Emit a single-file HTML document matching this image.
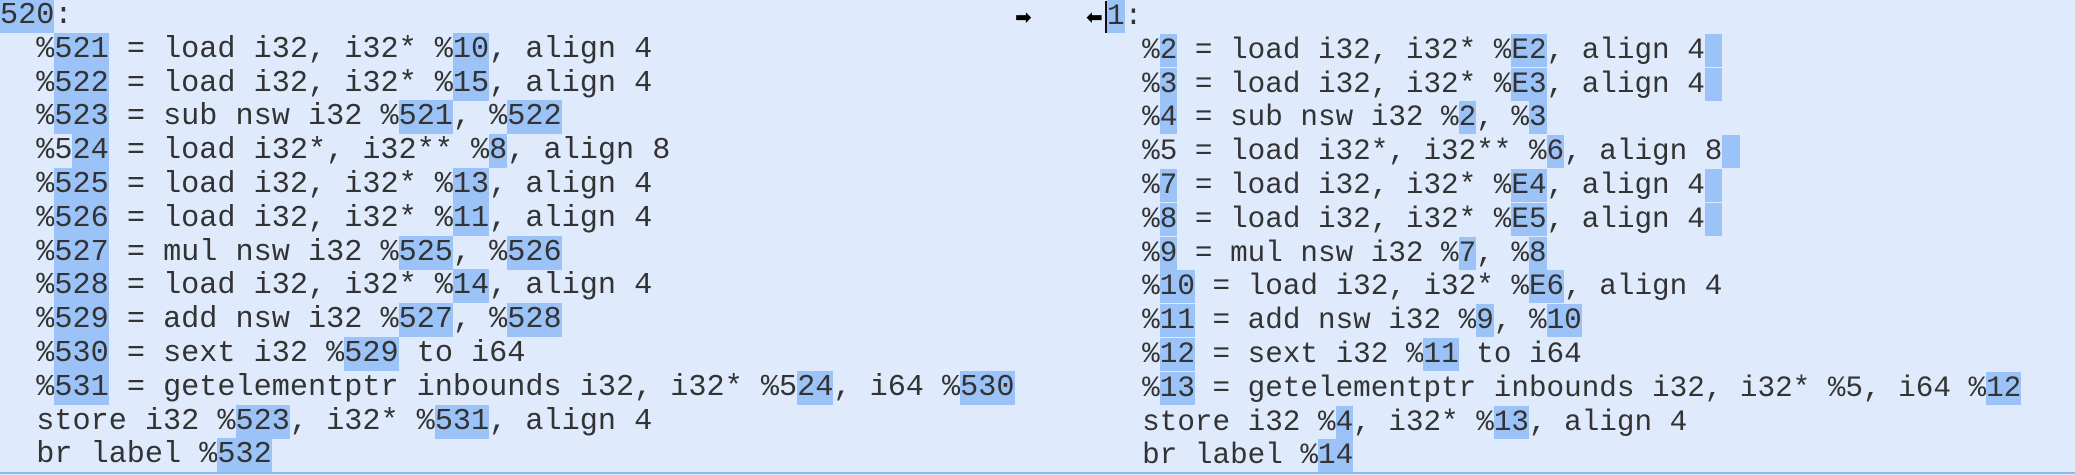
<!DOCTYPE html>
<html><head><meta charset="utf-8"><style>
html,body{margin:0;padding:0;}
body{width:2075px;height:475px;background:#dfebfc;position:relative;overflow:hidden;
font-family:"Liberation Mono",monospace;font-size:29.6px;color:#333;}
.col{position:absolute;top:0;}
.l{height:33.8px;line-height:33.8px;white-space:pre;}
b{font-weight:normal;background:#9cc3f8;}
.bot{position:absolute;left:0;top:472px;width:2075px;height:2px;background:#8ab8f2;}
.cur{position:absolute;left:1105px;top:1px;width:2px;height:32px;background:#111;}
.ar{position:absolute;top:2px;font-family:"DejaVu Sans",sans-serif;font-size:20px;color:#000;font-weight:bold;line-height:30px;}
</style></head><body>
<div class="col" style="left:0;font-size:30.2px">
<div class="l"><b>520</b>:</div>
<div class="l">  %<b>521</b> = load i32, i32* %<b>10</b>, align 4</div>
<div class="l">  %<b>522</b> = load i32, i32* %<b>15</b>, align 4</div>
<div class="l">  %<b>523</b> = sub nsw i32 %<b>521</b>, %<b>522</b></div>
<div class="l">  %5<b>24</b> = load i32*, i32** %<b>8</b>, align 8</div>
<div class="l">  %<b>525</b> = load i32, i32* %<b>13</b>, align 4</div>
<div class="l">  %<b>526</b> = load i32, i32* %<b>11</b>, align 4</div>
<div class="l">  %<b>527</b> = mul nsw i32 %<b>525</b>, %<b>526</b></div>
<div class="l">  %<b>528</b> = load i32, i32* %<b>14</b>, align 4</div>
<div class="l">  %<b>529</b> = add nsw i32 %<b>527</b>, %<b>528</b></div>
<div class="l">  %<b>530</b> = sext i32 %<b>529</b> to i64</div>
<div class="l">  %<b>531</b> = getelementptr inbounds i32, i32* %5<b>24</b>, i64 %<b>530</b></div>
<div class="l">  store i32 %<b>523</b>, i32* %<b>531</b>, align 4</div>
<div class="l">  br label %<b>532</b></div>
</div>
<div class="ar" style="left:1015px">➡</div>
<div class="ar" style="left:1086px">⬅</div>
<div class="col" style="left:1107px;font-size:29.3px">
<div class="l"><b>1</b>:</div>
<div class="l">  %<b>2</b> = load i32, i32* %<b>E2</b>, align 4<b> </b></div>
<div class="l">  %<b>3</b> = load i32, i32* %<b>E3</b>, align 4<b> </b></div>
<div class="l">  %<b>4</b> = sub nsw i32 %<b>2</b>, %<b>3</b></div>
<div class="l">  %5 = load i32*, i32** %<b>6</b>, align 8<b> </b></div>
<div class="l">  %<b>7</b> = load i32, i32* %<b>E4</b>, align 4<b> </b></div>
<div class="l">  %<b>8</b> = load i32, i32* %<b>E5</b>, align 4<b> </b></div>
<div class="l">  %<b>9</b> = mul nsw i32 %<b>7</b>, %<b>8</b></div>
<div class="l">  %<b>10</b> = load i32, i32* %<b>E6</b>, align 4</div>
<div class="l">  %<b>11</b> = add nsw i32 %<b>9</b>, %<b>10</b></div>
<div class="l">  %<b>12</b> = sext i32 %<b>11</b> to i64</div>
<div class="l">  %<b>13</b> = getelementptr inbounds i32, i32* %5, i64 %<b>12</b></div>
<div class="l">  store i32 %<b>4</b>, i32* %<b>13</b>, align 4</div>
<div class="l">  br label %<b>14</b></div>
</div>
<div class="cur"></div>
<div class="bot"></div>
</body></html>
